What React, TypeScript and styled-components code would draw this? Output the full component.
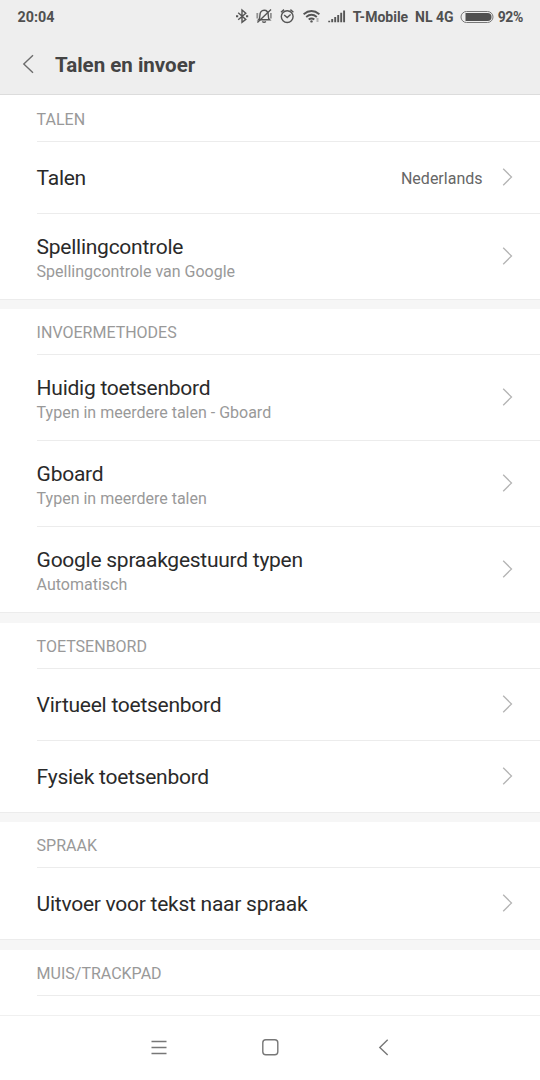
import React from 'react';
import styled, { createGlobalStyle } from 'styled-components';

const Global = createGlobalStyle`
  * { box-sizing: border-box; }
  body { margin: 0; background: #fff; font-family: Roboto, "Liberation Sans", sans-serif; }
`;

const Screen = styled.div`
  width: 540px;
  height: 1080px;
  display: flex;
  flex-direction: column;
  overflow: hidden;
  background: #fff;
`;

const Top = styled.header`
  flex: none;
  height: 95px;
  background: #eeeeee;
  border-bottom: 1px solid #dcdcdc;
`;

const StatusBar = styled.div`
  height: 34px;
  display: flex;
  align-items: center;
  padding: 0 17px 0 17.5px;
  color: #505050;
  font-size: 14px;
  font-weight: 700;
  line-height: 34px;
  white-space: pre;
`;

const Clock = styled.span`
  flex: 1;
  font-size: 14.3px;
`;

const StatusIcons = styled.div`
  display: flex;
  align-items: center;
  margin-right: 7px;
`;

const Carrier = styled.span`
  font-size: 14px;
`;

const Battery = styled.svg`
  margin: 0 4px 0 6px;
`;

const Percent = styled.span`
  font-size: 14px;
  letter-spacing: -0.35px;
`;

const TitleBar = styled.div`
  height: 60px;
  display: flex;
  align-items: center;
  padding-left: 22px;
`;

const Title = styled.h1`
  margin: 2px 0 0 20px;
  font-size: 20.5px;
  line-height: 24px;
  font-weight: 700;
  color: #444;
`;

const Content = styled.main`
  flex: 1;
  min-height: 0;
  overflow: hidden;
`;

const Section = styled.section<{ $gap?: number }>`
  border-top: ${p => (p.$gap ? `${p.$gap}px solid #f6f6f6` : '0')};
`;

const SectionHeader = styled.h2<{ $tall?: boolean }>`
  height: ${p => (p.$tall ? 47 : 46)}px;
  margin: 0 0 0 37px;
  padding-top: ${p => (p.$tall ? 15 : 14)}px;
  border-bottom: 1px solid #ececec;
  font-size: 16px;
  line-height: 20px;
  font-weight: 400;
  color: #999;
  text-indent: -0.4px;
`;

const Row = styled.div<{ $two?: boolean }>`
  height: ${p => (p.$two ? 86 : 72)}px;
  margin-left: 37px;
  padding-right: 27px;
  display: flex;
  align-items: center;
  border-bottom: 1px solid #ececec;

  &:last-child {
    margin-left: 0;
    padding-left: 37px;
  }
`;

const Labels = styled.div<{ $two?: boolean }>`
  flex: 1;
  display: flex;
  flex-direction: column;
  padding-top: ${p => (p.$two ? 2 : 0)}px;
  text-indent: -0.4px;
`;

const Label = styled.span`
  font-size: 21px;
  line-height: 26px;
  letter-spacing: -0.26px;
  color: #2a2a2a;
`;

const Summary = styled.span`
  font-size: 16px;
  line-height: 20px;
  margin-top: 2px;
  color: #999;
`;

const Value = styled.span`
  margin: 2px 19.5px 0 0;
  font-size: 16px;
  line-height: 20px;
  color: #666;
`;

const Arrow = styled.svg`
  margin-bottom: 1px;
`;

const NavBar = styled.nav`
  flex: none;
  height: 65px;
  display: flex;
  align-items: center;
  justify-content: center;
  gap: 95px;
  padding-bottom: 2px;
  border-top: 1px solid #f0f0f0;
`;

const NavIcon = styled.svg`
  width: 18px;
  height: 18px;
  fill: none;
  stroke: #777;
  stroke-width: 1.4;
  overflow: visible;
`;

const Chevron = () => (
  <Arrow width="11" height="18" viewBox="0 0 11 18" fill="none" stroke="#b4b4b4" strokeWidth="1.3">
    <path d="M1.2 0.8 9.5 9 1.2 17.2" />
  </Arrow>
);

const Back = () => (
  <svg width="13" height="20" viewBox="0 0 13 20" fill="none" stroke="#6c6c6c" strokeWidth="1.4">
    <path d="M11 1.2 1.8 10 11 18.8" />
  </svg>
);

const StatusGlyphs = () => (
  <svg width="112" height="20" viewBox="234 7 112 20" fill="none" stroke="#555" strokeWidth="1.4">
    <path d="M238.2 12.8 245.8 19.4 242 22.4V10L245.8 13.2 238.2 19.8" />
    <path d="M236 16.3h2.2M246 16.3h2.2" strokeWidth="1.9" />
    <path d="M258.6 19.8c1.2-1 1.3-2.4 1.3-4.4 0-3.2 1.6-5.2 4.2-5.2s4.2 2 4.2 5.2c0 2 .1 3.4 1.3 4.4Z" />
    <path d="M262.3 21.4q1.8 1.6 3.6 0M257.4 22.4 271 9.4" />
    <path d="M257.3 13v5.4M270.9 13v5.4" strokeWidth="1.8" opacity=".6" />
    <circle cx="287.2" cy="16.6" r="5.9" />
    <path d="M284.2 15 287.2 17.6 290.6 14.6M281 12.2 284 9.6M293.4 12.2 290.4 9.6" />
    <path d="M303.6 14.2q7.9-6.4 15.800 0M306.2 17q5.3-4.4 10.6 0M308.7 19.6q2.8-2.3 5.6 0" strokeWidth="1.9" />
    <circle cx="311.5" cy="21.4" r="1.2" fill="#555" stroke="none" />
    <path d="M317.5 18v4" stroke="#b4b4b4" strokeWidth="2" />
    <path d="M329.2 20.8V22.3M332.2 19V22.3M335.2 17V22.3M338.2 15V22.3M341.2 12.8V22.3M344.1 10.6V22.3" strokeWidth="1.9" />
  </svg>
);

type Item = { label: string; summary?: string; value?: string };
type Group = { title: string; gap?: number; tall?: boolean; items: Item[] };

const groups: Group[] = [
  {
    title: 'TALEN',
    tall: true,
    items: [
      { label: 'Talen', value: 'Nederlands' },
      { label: 'Spellingcontrole', summary: 'Spellingcontrole van Google' },
    ],
  },
  {
    title: 'INVOERMETHODES',
    gap: 9,
    items: [
      { label: 'Huidig toetsenbord', summary: 'Typen in meerdere talen - Gboard' },
      { label: 'Gboard', summary: 'Typen in meerdere talen' },
      { label: 'Google spraakgestuurd typen', summary: 'Automatisch' },
    ],
  },
  {
    title: 'TOETSENBORD',
    gap: 10,
    items: [{ label: 'Virtueel toetsenbord' }, { label: 'Fysiek toetsenbord' }],
  },
  { title: 'SPRAAK', gap: 9, items: [{ label: 'Uitvoer voor tekst naar spraak' }] },
  { title: 'MUIS/TRACKPAD', gap: 10, items: [] },
];

export default function App() {
  return (
    <Screen>
      <Global />
      <Top>
        <StatusBar>
          <Clock>20:04</Clock>
          <StatusIcons><StatusGlyphs /></StatusIcons>
          <Carrier>T-Mobile  NL 4G</Carrier>
          <Battery width="34" height="14" viewBox="0 0 34 14">
            <rect x="1" y="1.5" width="32" height="11" rx="5.5" fill="none" stroke="#777" />
            <path d="M5.5 3H27.5a4 4 0 0 1 0 8H5.5Z" fill="#505050" />
          </Battery>
          <Percent>92%</Percent>
        </StatusBar>
        <TitleBar>
          <Back />
          <Title>Talen en invoer</Title>
        </TitleBar>
      </Top>
      <Content>
        {groups.map(g => (
          <Section key={g.title} $gap={g.gap}>
            <SectionHeader $tall={g.tall}>{g.title}</SectionHeader>
            {g.items.map(i => (
              <Row key={i.label} $two={!!i.summary}>
                <Labels $two={!!i.summary}>
                  <Label>{i.label}</Label>
                  {i.summary && <Summary>{i.summary}</Summary>}
                </Labels>
                {i.value && <Value>{i.value}</Value>}
                <Chevron />
              </Row>
            ))}
          </Section>
        ))}
      </Content>
      <NavBar>
        <NavIcon viewBox="0 0 18 18">
          <path d="M3.500 3.500h15M3.500 9.500h15M3.500 15.500h15" />
        </NavIcon>
        <NavIcon viewBox="0 0 18 18">
          <rect x="1.800" y="1.800" width="15" height="15" rx="3" />
        </NavIcon>
        <NavIcon viewBox="0 0 18 18">
          <path d="M13.700 1.800 5.800 9.400l7.900 7.600" />
        </NavIcon>
      </NavBar>
    </Screen>
  );
}
